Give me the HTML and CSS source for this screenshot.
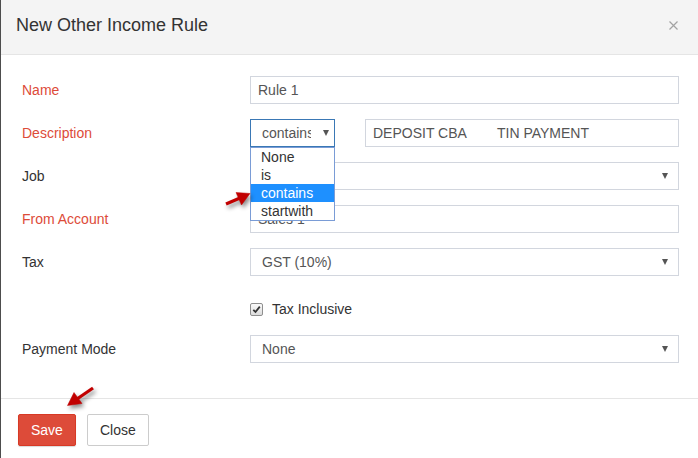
FILE: index.html
```html
<!DOCTYPE html>
<html lang="en">
<head>
    <meta charset="UTF-8">
    <meta name="viewport" content="width=device-width, initial-scale=1.0">
    <title>New Other Income Rule</title>
    <link rel="stylesheet" href="styles.css">
</head>
<body>
    <div class="modal">
        <div class="modal-header">
            <h4 class="modal-title">New Other Income Rule</h4>
            <button class="close" type="button" aria-label="Close">
                <svg width="9" height="9" viewBox="0 0 9 9"><path d="M0.5 0.5L8.5 8.5M8.5 0.5L0.5 8.5" stroke="#a3a3a3" stroke-width="1.2"/></svg>
            </button>
        </div>
        <div class="modal-body">
            <div class="form-row">
                <label class="required">Name</label>
                <input class="form-control" type="text" value="Rule 1">
            </div>
            <div class="form-row">
                <label class="required">Description</label>
                <div class="desc-group">
                    <div class="select select-focus">
                        <span class="select-text">contains</span>
                        <span class="caret"></span>
                        <ul class="select-list">
                            <li>None</li>
                            <li>is</li>
                            <li class="active">contains</li>
                            <li>startwith</li>
                        </ul>
                    </div>
                    <input class="form-control" type="text" value="DEPOSIT CBA        TIN PAYMENT">
                </div>
            </div>
            <div class="form-row">
                <label>Job</label>
                <div class="select">
                    <span class="select-text"></span>
                    <span class="caret"></span>
                </div>
            </div>
            <div class="form-row">
                <label class="required">From Account</label>
                <input class="form-control" type="text" value="Sales 1">
            </div>
            <div class="form-row">
                <label>Tax</label>
                <div class="select">
                    <span class="select-text">GST (10%)</span>
                    <span class="caret"></span>
                </div>
            </div>
            <div class="form-row check-row">
                <span></span>
                <label class="checkbox">
                    <span class="check-box">
                        <svg width="9" height="9" viewBox="0 0 9 9"><path d="M1.3 4.8L3.5 7L7.8 1.6" fill="none" stroke="#333" stroke-width="1.8"/></svg>
                    </span>
                    Tax Inclusive
                </label>
            </div>
            <div class="form-row">
                <label>Payment Mode</label>
                <div class="select">
                    <span class="select-text">None</span>
                    <span class="caret"></span>
                </div>
            </div>
        </div>
        <div class="modal-footer">
            <button class="btn btn-save" type="button">Save</button>
            <button class="btn btn-close" type="button">Close</button>
        </div>

        <!-- annotation arrows drawn over the screenshot -->
        <svg class="arrows" width="698" height="458" viewBox="0 0 698 458">
            <g fill="#c10000" stroke="#c10000">
                <line x1="225" y1="204" x2="239" y2="198" stroke-width="3.2"/>
                <polygon points="249,193.5 240.5,205 235,192.5" stroke-width="0.5"/>
                <line x1="92" y1="388" x2="76" y2="399" stroke-width="3.2"/>
                <polygon points="66.5,405.5 81,403.5 73,392.5" stroke-width="0.5"/>
            </g>
        </svg>
    </div>
</body>
</html>
```

FILE: styles.css
```css
body {
    margin: 0;
    font-family: "Liberation Sans", Arial, sans-serif;
    font-size: 14px;
    color: #333;
    background: #fff;
}
.modal {
    position: relative;
    width: 698px;
    height: 458px;
    overflow: hidden;
    box-sizing: border-box;
    border-left: 1px solid #4d4d4d;
}
.modal-header {
    display: flex;
    align-items: center;
    justify-content: space-between;
    height: 54px;
    padding: 0 20px 0 15px;
    background-color: #f4f4f4;
    border-bottom: 1px solid #e5e5e5;
}
.modal-title {
    margin: 0;
    font-size: 18px;
    font-weight: normal;
    color: #333;
    padding-bottom: 4px;
}
.close {
    border: none;
    background: none;
    padding: 0;
    margin-bottom: 4px;
    display: flex;
}
.modal-body {
    display: flex;
    flex-direction: column;
    gap: 15px;
    padding: 21px 19px 35px 21px;
    border-bottom: 1px solid #e5e5e5;
}
.form-row {
    display: grid;
    grid-template-columns: 228px 1fr;
    align-items: center;
    height: 28px;
}
.form-row label {
    display: block;
}
.required {
    color: #dd4b39;
}
.form-control {
    width: 100%;
    height: 28px;
    box-sizing: border-box;
    padding: 0 7px;
    border: 1px solid #d2d6de;
    font-family: inherit;
    font-size: 14px;
    color: #555;
    outline: none;
    white-space: pre;
}
.desc-group {
    display: flex;
    gap: 30px;
}
.select {
    position: relative;
    display: flex;
    align-items: center;
    height: 28px;
    box-sizing: border-box;
    padding: 0 10px 0 11px;
    border: 1px solid #d2d6de;
    color: #555;
}
.select-text {
    flex: 1;
    overflow: hidden;
    white-space: nowrap;
}
.caret {
    width: 0;
    height: 0;
    border-left: 3.5px solid transparent;
    border-right: 3.5px solid transparent;
    border-top: 6px solid #555;
    margin-left: 4px;
}
.select-focus {
    width: 85px;
    flex: none;
    border-color: #3a78b5;
    padding-right: 5px;
}
.select-focus .select-text {
    flex: none;
    width: 49px;
}
.select-focus .caret {
    margin-left: auto;
}
.select-list {
    position: absolute;
    top: 27px;
    left: -1px;
    width: 85px;
    box-sizing: border-box;
    margin: 0;
    padding: 0;
    list-style: none;
    background: #fff;
    border: 1px solid #7a9cd6;
    z-index: 2;
}
.select-list li {
    height: 18px;
    line-height: 18px;
    padding-left: 10px;
    color: #333;
}
.select-list li.active {
    background-color: #1e90ff;
    color: #fff;
}
.check-row {
    height: 29px;
    align-items: end;
    padding-bottom: 4px;
    box-sizing: border-box;
}
.form-row .checkbox {
    display: flex;
    align-items: center;
    gap: 9px;
    line-height: 14px;
    color: #333;
}
.check-box {
    display: flex;
    align-items: center;
    justify-content: center;
    width: 11px;
    height: 11px;
    border: 1px solid #8f8f8f;
    border-radius: 2px;
    background: linear-gradient(#fafafa, #dcdcdc);
}
.modal-footer {
    display: flex;
    gap: 11px;
    padding: 15px 17px;
}
.btn {
    height: 32px;
    padding: 0 12px;
    border: 1px solid;
    border-radius: 3px;
    font-family: inherit;
    font-size: 14px;
    cursor: pointer;
}
.btn-save {
    background-color: #dd4b39;
    border-color: #d73925;
    color: #fff;
    border-radius: 2px;
    box-shadow: 0 1px 1px rgba(0,0,0,0.15);
}
.btn-close {
    background-color: #fff;
    border-color: #ccc;
    color: #333;
    border-radius: 2px;
}
.arrows {
    position: absolute;
    top: 0;
    left: 0;
    pointer-events: none;
    z-index: 3;
    filter: drop-shadow(2px 3px 2px rgba(0,0,0,0.45));
}
```
